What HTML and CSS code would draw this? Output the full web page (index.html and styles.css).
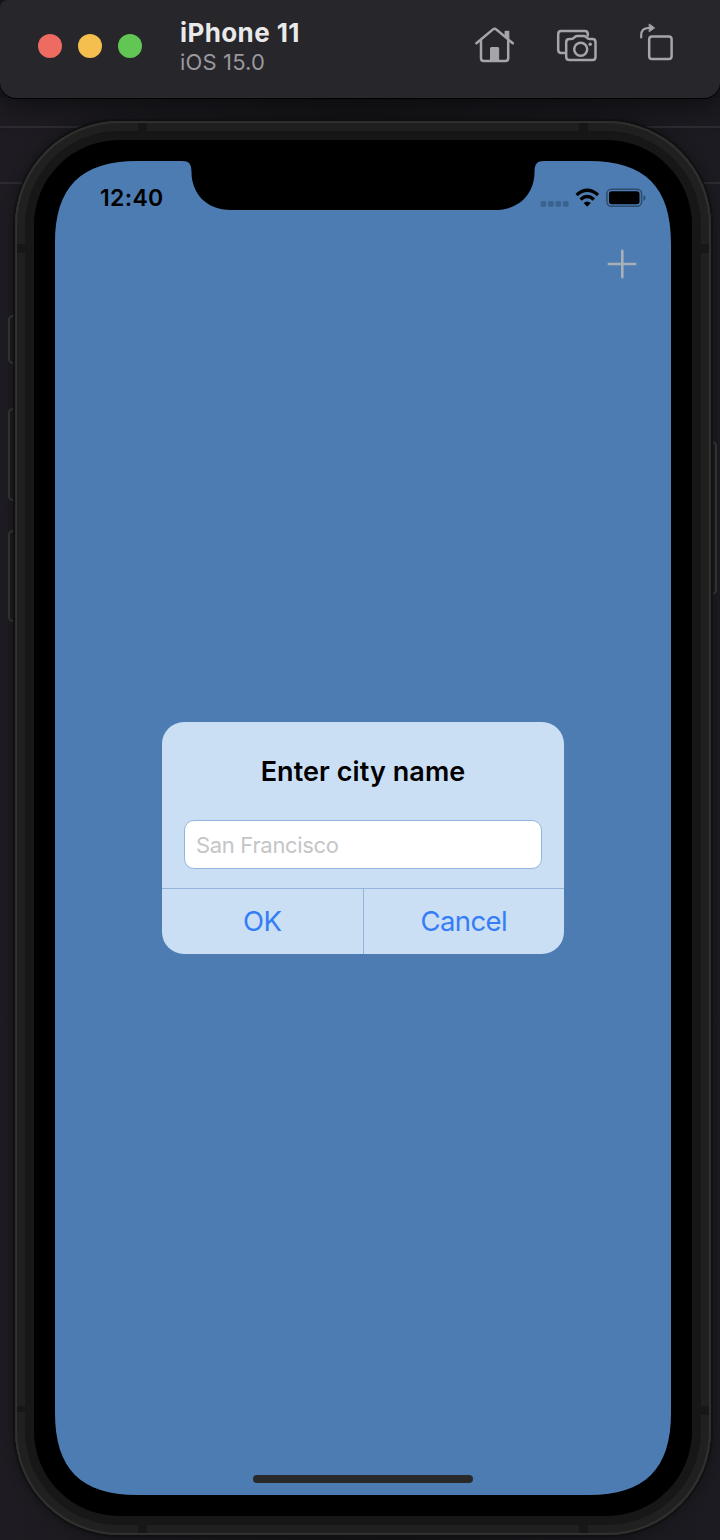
FILE: index.html
```html
<!DOCTYPE html>
<html lang="en">
<head>
<meta charset="utf-8">
<title>iPhone 11</title>
<link rel="stylesheet" href="styles.css">
</head>
<body>
<header class="toolbar">
  <div class="lights"><i class="light red"></i><i class="light yellow"></i><i class="light green"></i></div>
  <div class="titles">
    <div class="device-name">iPhone 11</div>
    <div class="device-os">iOS 15.0</div>
  </div>
  <svg class="tools" width="210" height="50" viewBox="470 20 210 50" fill="none" stroke="#a6a5aa" stroke-width="2.5" stroke-linecap="round" stroke-linejoin="round">
    <path d="M476.400 43.300 L493 29.400 Q494.600 28 496.200 29.400 L512.800 43.300"/>
    <path d="M481 41 V58.300 Q481 61 483.700 61 H505.500 Q508.200 61 508.200 58.300 V41"/>
    <path d="M505.200 31.500 H508.700 V39.500 L505.200 36.500 Z" fill="#a6a5aa" stroke-width="1.300"/>
    <path d="M490.500 61 V48.200 Q490.500 47.500 491.200 47.500 H498 Q498.700 47.500 498.700 48.200 V61 Z" fill="#a6a5aa" stroke-width="1"/>
    <path d="M564.500 53 H561.200 Q558.200 53 558.200 49.800 V34 Q558.200 31 561.200 31 H584.800 Q587.800 31 587.800 34 V35.500"/>
    <path d="M569.500 39 H571.500 Q573 39 574 37.800 L575 36.900 Q575.800 36.100 577 36.100 H584 Q585.200 36.100 586 36.900 L587 37.800 Q588 39 589.500 39 H592.500 Q595.500 39 595.500 42.200 V57 Q595.500 60 592.500 60 H569.500 Q566.200 60 566.200 57 V42.200 Q566.200 39 569.500 39 Z"/>
    <circle cx="580.700" cy="49.200" r="6.500"/>
    <circle cx="590.200" cy="44.200" r="1.700" fill="#a6a5aa" stroke="none"/>
    <path d="M641.200 37.500 V35.500 Q641.200 28 648.500 28 H650" stroke-width="2.200"/>
    <path d="M649.500 24.200 L654.600 27.900 L649.500 31.600 Z" fill="#a6a5aa" stroke-width="1"/>
    <rect x="649.200" y="36.400" width="22.400" height="22.600" rx="2.800"/>
  </svg>
</header>
<main class="stage">
  <i class="key mute"></i><i class="key vol-up"></i><i class="key vol-down"></i><i class="key power"></i>
  <div class="frame">
    <i class="band v t1"></i><i class="band v t2"></i><i class="band v b1"></i><i class="band v b2"></i>
    <i class="band h l1"></i><i class="band h l2"></i><i class="band h r1"></i><i class="band h r2"></i>
    <div class="rim"><div class="bezel"><div class="screen">
      <div class="status">
        <span class="clock">12:40</span>
        <svg class="indicators" width="108" height="24" viewBox="539 186 108 24">
          <g fill="#3a628f"><rect x="540.600" y="201" width="5.600" height="5.700" rx="1.500"/><rect x="548.100" y="201" width="5.600" height="5.700" rx="1.500"/><rect x="555.500" y="201" width="5.600" height="5.700" rx="1.500"/><rect x="562.900" y="201" width="5.600" height="5.700" rx="1.500"/></g>
          <g fill="none" stroke="#000" stroke-width="3.400"><path d="M576.600 195 Q587.200 185.600 598 195"/><path d="M580.600 199.500 Q587.200 193.600 593.900 199.500"/></g>
          <path d="M583.600 203 Q587.200 200 590.800 203 L587.200 206.700 Z"/>
          <rect x="606.900" y="189.300" width="34.700" height="17" rx="4.500" fill="none" stroke="#2d4b6f" stroke-width="1.500"/>
          <rect x="609" y="191.300" width="30.500" height="13" rx="2.700"/>
          <path d="M643.500 195.200 Q645.600 196 645.600 198 Q645.600 200 643.500 200.900 Z" fill="#2d4b6f"/>
        </svg>
      </div>
      <svg class="plus" width="30" height="30" viewBox="0 0 30 30" stroke="#a7b0b9" stroke-width="2.600" stroke-linecap="round"><path d="M1.800 15 H28.200 M15.300 1.800 V28.200"/></svg>
      <div class="alert">
        <div class="alert-title">Enter city name</div>
        <input class="city" type="text" placeholder="San Francisco">
        <div class="actions"><button class="action">OK</button><button class="action">Cancel</button></div>
      </div>
      <div class="home"></div>
    </div></div></div>
  </div>
</main>
</body>
</html>
```
FILE: styles.css
```css
* { box-sizing: border-box; }
body { margin: 0; width: 720px; height: 1540px; overflow: hidden; background: #1a191e; font-family: Inter, "Liberation Sans", sans-serif; }
i { display: block; }
.toolbar { position: relative; z-index: 1; display: flex; align-items: flex-start; height: 98px; padding: 17px 40px 0 38px; background: #27262b; border-radius: 8px 0 16px 16px; box-shadow: 0 1px 0 #000, 0 4px 28px #0009; }
.lights { display: flex; gap: 16px; padding-top: 17px; }
.light { width: 24px; height: 24px; border-radius: 50%; }
.red { background: #ed6b60; }
.yellow { background: #f5bf4f; }
.green { background: #62c655; }
.titles { margin-left: 38px; white-space: nowrap; }
.device-name { font-size: 26px; line-height: 31px; font-weight: 700; color: #e9e9ea; letter-spacing: .4px; }
.device-os { font-size: 22px; line-height: 28px; color: #99989d; letter-spacing: .15px; }
.tools { margin: 3px 0 0 auto; }
.stage { position: relative; height: 1442px; padding: 23px 0 0 15px; background: linear-gradient(#2c2b31, #2c2b31) 0 28px / 100% 2px no-repeat, linear-gradient(#2c2b31, #2c2b31) 0 84px / 100% 2px no-repeat, linear-gradient(90deg, #1e1c22, #151418 50%, #1c1b21); }
.frame { position: relative; width: 696px; height: 1414px; padding: 10px; border-radius: 104px; background: #202020; box-shadow: inset 0 0 0 1px #2d2d2d, inset 0 0 0 2px #333332, 0 0 0 2px #111112, 0 0 14px #0007; }
.rim { height: 100%; padding: 9px; border-radius: 94px; background: #171717; }
.bezel { height: 100%; padding: 21px; border-radius: 85px; background: #000; }
.screen { display: flex; flex-direction: column; height: 1334px; width: 616px; background: #4d7cb2; clip-path: path("M82 0 H127 C134 0 136.500 3 136.500 11 C136.500 32 151 49 176 49 H440 C465 49 479.500 32 479.500 11 C479.500 3 482 0 489 0 H534 C590 0 616 26 616 82 V1252 C616 1308 590 1334 534 1334 H82 C26 1334 0 1308 0 1252 V82 C0 26 26 0 82 0 Z"); }
.status { display: flex; justify-content: space-between; padding: 25px 24px 0 45px; height: 88px; }
.clock { font-size: 23px; line-height: 25px; font-weight: 600; letter-spacing: .35px; }
.plus { margin: 0 34px 0 auto; flex: none; }
.alert { flex: none; width: 402px; height: 232px; margin: 443px 0 0 107px; display: flex; flex-direction: column; border-radius: 22px; background: #cbdff4; overflow: hidden; }
.alert-title { padding-top: 33px; height: 98px; line-height: 34px; text-align: center; font-size: 27px; font-weight: 600; color: #000; letter-spacing: .08px; }
.city { width: 358px; height: 49px; margin: 0 22px 19px; padding: 1px 11px 0; border: 1px solid #93b6de; border-radius: 10px; background: #fff; font: 22px Inter, "Liberation Sans", sans-serif; letter-spacing: -.32px; outline: 0; }
.city::placeholder { color: #c5c5c7; opacity: 1; }
.actions { display: flex; flex: 1; border-top: 1px solid #94b4db; }
.action { flex: 1; padding: 0 0 1px; border: 0; background: none; color: #357df6; font: 27.500px Inter, "Liberation Sans", sans-serif; letter-spacing: -.6px; }
.action + .action { border-left: 1px solid #94b4db; }
.home { flex: none; width: 220px; height: 8px; margin: 521px 0 0 198px; border-radius: 4px; background: #292929; }
.band { position: absolute; background: #171717; }
.v { width: 9px; height: 8px; }
.h { width: 8px; height: 9px; }
.t1, .t2 { top: 2px; }
.b1, .b2 { bottom: 2px; }
.t1, .b1 { left: 123px; }
.t2, .b2 { left: 564px; }
.l1, .l2 { left: 2px; }
.r1, .r2 { right: 2px; }
.l1, .r1 { top: 123px; }
.l2, .r2 { top: 1285px; }
.l2 { height: 6px; }
.key { position: absolute; width: 12px; background: #1c1c1c; border: 2px solid #373737; border-radius: 5px; }
.mute { left: 8px; top: 217px; height: 49px; }
.vol-up { left: 8px; top: 310px; height: 93px; }
.vol-down { left: 8px; top: 432px; height: 92px; }
.power { left: 705px; top: 343px; height: 154px; }
```
